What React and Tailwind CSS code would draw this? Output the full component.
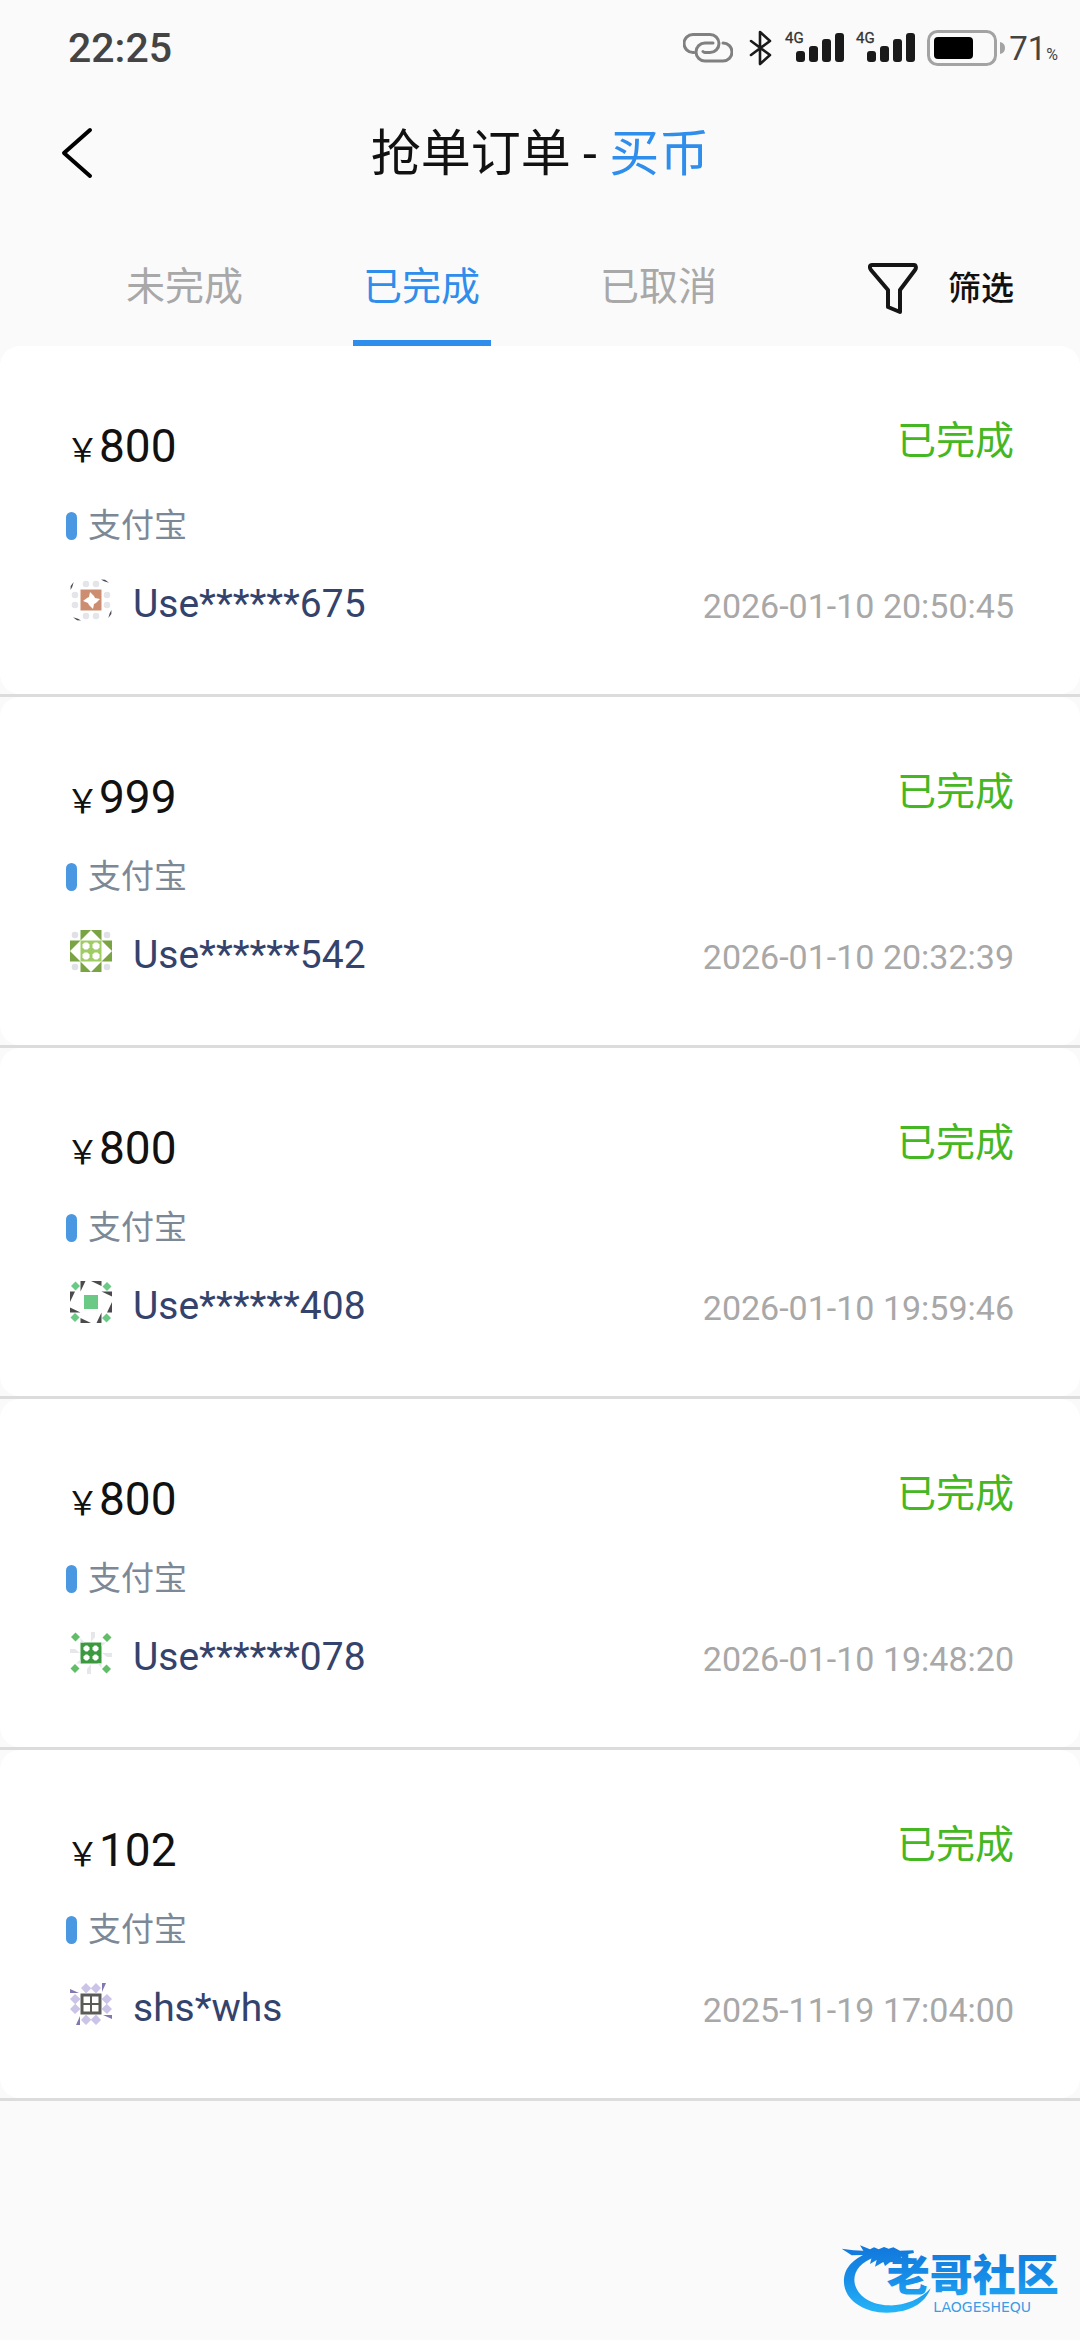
const orders = [
  { id: 1, amount: '800', user: 'Use******675', time: '2026-01-10 20:50:45', Avatar: StarAvatar },
  { id: 2, amount: '999', user: 'Use******542', time: '2026-01-10 20:32:39', Avatar: TileAvatar },
  { id: 3, amount: '800', user: 'Use******408', time: '2026-01-10 19:59:46', Avatar: RingAvatar },
  { id: 4, amount: '800', user: 'Use******078', time: '2026-01-10 19:48:20', Avatar: FlowerAvatar },
  { id: 5, amount: '102', user: 'shs*whs', time: '2025-11-19 17:04:00', Avatar: WindowAvatar },
];

const turns = [0, 90, 180, 270];

function Quarter({ children }) {
  return turns.map((a) => (
    <g key={a} transform={`rotate(${a} 21 21)`}>
      {children}
    </g>
  ));
}

function AvatarFrame({ children }) {
  return (
    <svg className="mb-2 size-[42px] shrink-0" viewBox="0 0 42 42" aria-hidden="true">
      {children}
    </svg>
  );
}

function StarAvatar() {
  return (
    <AvatarFrame>
      <rect x="10.5" y="10.5" width="21" height="21" fill="#cc8d71" />
      <path d="M20 13l4 4 1 2 5 1-4 4-2 1-1 5-4-4-1-2-5-2 4-3 2-1z" fill="#fff" />
      <Quarter>
        <circle cx="16" cy="5" r="3.3" fill="#e4e5e9" />
        <circle cx="26" cy="5" r="3.3" fill="#e4e5e9" />
        <path d="M31 .5l4 .2 4 3-5-1.500z" fill="#4a4a55" />
      </Quarter>
    </AvatarFrame>
  );
}

function TileAvatar() {
  return (
    <AvatarFrame>
      <rect x="10.5" y="10.5" width="21" height="21" fill="#a0cc66" />
      <Quarter>
        <path d="M10.5 0h21v10.5L21 0 10.5 10.5z" fill="#7aa343" />
        <circle cx="5" cy="5" r="3.3" fill="#dfe1e6" />
        <path d="M14.500 12.500h3l2 2v3l-2 2h-3l-2-2v-3z" fill="#fff" />
      </Quarter>
    </AvatarFrame>
  );
}

function RingAvatar() {
  return (
    <AvatarFrame>
      <rect x="14" y="14" width="14" height="14" fill="#69c985" />
      <Quarter>
        <path d="M10.5 0h5l-5 10.5zM21 0h10.5v5z" fill="#4b4b4d" />
        <path d="M5.500 .5l4.500 4.500-4.500 4.500L1 5z" fill="#69c985" />
      </Quarter>
    </AvatarFrame>
  );
}

function FlowerAvatar() {
  return (
    <AvatarFrame>
      <rect x="10.5" y="10.5" width="21" height="21" fill="#3b9a3e" />
      <Quarter>
        <path d="M21 0h4v5l-4 5zM10.5 6l4 4.500h-4z" fill="#e6e7ea" />
        <path d="M5.500 .5l4.500 4.500-4.500 4.500L1 5z" fill="#62bd68" />
        <path d="M15.500 13.500h2l2 2v2l-2 2h-2l-2-2v-2z" fill="#fff" />
      </Quarter>
    </AvatarFrame>
  );
}

function WindowAvatar() {
  return (
    <AvatarFrame>
      <rect x="10.5" y="10.5" width="21" height="21" fill="#5b5b58" />
      <Quarter>
        <path d="M13.500 13.500h6.500v6.500h-6.500z" fill="#fff" />
        <path d="M16 0l5 5 5-5 5 5-5 5.500-5-5-5 5L11 5z" fill="#cbc4e8" />
        <path d="M32 0h4l-4 9z" fill="#8278b0" />
      </Quarter>
    </AvatarFrame>
  );
}

function Signal() {
  return (
    <svg className="h-11 w-[59px] overflow-visible" viewBox="0 -4 59 44" aria-hidden="true">
      <text x="0" y="13" fontSize="15" fill="#333" stroke="#333" strokeWidth="0.3">4G</text>
      <g fill="#1a1a1a">
        <rect x="11" y="21" width="9" height="11" rx="3" />
        <rect x="24" y="16" width="9" height="16" rx="3" />
        <rect x="37" y="9" width="9" height="23" rx="3" />
        <rect x="50" y="3" width="9" height="29" rx="3" />
      </g>
    </svg>
  );
}

function StatusBar() {
  return (
    <div className="flex h-24 items-center justify-between pl-[68px] pr-[22px]">
      <span className="text-[41px] font-medium leading-none text-[#444]">22:25</span>
      <div className="flex items-center">
        <svg className="mr-4 h-8 w-[50px]" viewBox="0 0 50 32" fill="none" stroke="#808080" strokeWidth="3" strokeLinecap="round" aria-hidden="true">
          <path d="M11 20.500h-1A9 9 0 0 1 10 2.500h17a8.500 8.500 0 0 1 0 18h-5a4 4 0 0 1-2-1" />
          <path d="M40 11a8.500 8.500 0 0 1 0 18H22a9 9 0 0 1 0-18h8" />
        </svg>
        <svg className="mr-3 h-9 w-6" viewBox="0 0 24 36" fill="none" stroke="#1a1a1a" strokeWidth="2.6" strokeLinecap="round" strokeLinejoin="round" aria-hidden="true">
          <path d="M2 11l19 14-10 9V2l10 9L2 25" />
        </svg>
        <div className="flex gap-3">
          <Signal />
          <Signal />
        </div>
        <svg className="ml-3 h-9 w-[78px]" viewBox="0 0 78 36" aria-hidden="true">
          <rect x="1.5" y="1.5" width="67" height="33" rx="9" fill="none" stroke="#a3a3a3" strokeWidth="3" />
          <rect x="7" y="7" width="39" height="22" rx="4" fill="#000" />
          <path d="M73 12q5 1 5 6t-5 6z" fill="#a3a3a3" />
        </svg>
        <span className="ml-1 flex items-baseline leading-none text-[#444]">
          <span className="text-[33px]">71</span>
          <span className="text-[16px]">%</span>
        </span>
      </div>
    </div>
  );
}

function Tab({ label, active }) {
  return (
    <button
      role="tab"
      aria-selected={Boolean(active)}
      className={`flex flex-1 flex-col items-center justify-between pt-12 text-[39px] leading-[58px] ${active ? 'text-[#2f8eeb]' : 'text-[#a8a8a8]'}`}
    >
      {label}
      <span className={`h-[6px] w-[138px] ${active ? 'bg-[#2f8eeb]' : 'bg-transparent'}`} />
    </button>
  );
}

function Order({ amount, user, time, Avatar }) {
  return (
    <li className="border-b-[3px] border-[#dcdcdc]">
      <article className="rounded-[20px] bg-white px-[66px] pb-[60px] pt-[66px]">
        <div className="flex items-start justify-between">
          <p className="flex items-baseline leading-[68px] text-[#111]">
            <span className="text-[33px]">￥</span>
            <span className="text-[46px]">{amount}</span>
          </p>
          <span className="text-[39px] leading-[58px] text-[#45b722]">已完成</span>
        </div>
        <div className="mt-[17px] flex items-center gap-[11px]">
          <span className="h-7 w-[11px] rounded-full bg-[#4a98e2]" />
          <span className="text-[33px] leading-[48px] text-[#7d8896]">支付宝</span>
        </div>
        <div className="mt-6 flex items-center justify-between">
          <div className="flex items-center pl-1">
            <Avatar />
            <span className="ml-[21px] text-[39px] leading-[60px] text-[#34436c]">{user}</span>
          </div>
          <time className="pt-1 text-[34px] leading-none text-[#a8a8a8]">{time}</time>
        </div>
      </article>
    </li>
  );
}

function Watermark() {
  return (
    <svg className="absolute bottom-5 right-4 h-20 w-[224px]" viewBox="60 60 672 240" role="img" aria-label="老哥社区">
      <defs>
        <linearGradient id="wave" x1="0" y1="80" x2="0" y2="280" gradientUnits="userSpaceOnUse">
          <stop offset="0" stopColor="#1278dc" />
          <stop offset="0.5" stopColor="#178fe9" />
          <stop offset="1" stopColor="#26b6f8" />
        </linearGradient>
      </defs>
      <g fill="url(#wave)">
        <path d="M150 95C90 120 70 150 72 190c4 50 58 88 128 88 70 0 115-28 132-73-32 35-82 53-127 51-55-2-100-31-102-76 0-30 22-55 62-68z" />
        <path d="M65 86l35 5 30 1-10-16 30 12 12-6 14 6 16-7 14 5 14-4 20 10 40-1 2 8-32 6-8 8 33 2-3 13-32-5-30 4-15 11-5-12-25 14 5-20-20 12 5-20-27-7-33 1z" />
        <text x="200" y="212" fontSize="129" fontWeight="900">老哥社区</text>
      </g>
      <text x="340" y="276" fontSize="42" fill="#3d9ce6" fontFamily="DejaVu Sans, sans-serif">LAOGESHEQU</text>
    </svg>
  );
}

export default function App() {
  return (
    <div className="relative min-h-screen bg-[#fafafa] font-['Roboto','Noto_Sans_CJK_SC',sans-serif]" lang="zh-CN">
      <StatusBar />
      <header className="grid h-[114px] grid-cols-[1fr_auto_1fr] items-center px-[60px]">
        <button aria-label="返回" className="justify-self-start">
          <svg className="h-[54px] w-9" viewBox="0 0 36 54" fill="none" stroke="#000" strokeWidth="4" strokeLinecap="round" strokeLinejoin="round" aria-hidden="true">
            <path d="M30 4L4 27l26 23" />
          </svg>
        </button>
        <h1 className="pt-[2px] text-[50px] leading-[72px] text-[#111]">
          抢单订单 - <span className="text-[#2f8eeb]">买币</span>
        </h1>
      </header>
      <div className="flex h-[136px] items-stretch px-[66px]">
        <div role="tablist" className="flex flex-1">
          <Tab label="未完成" />
          <Tab label="已完成" active />
          <Tab label="已取消" />
        </div>
        <button className="flex w-[237px] items-center justify-end gap-[30px] pt-[22px] text-[33px] font-medium leading-[48px] text-[#111]">
          <svg className="h-[54px] w-[50px]" viewBox="0 0 50 54" fill="none" stroke="#151515" strokeWidth="4" strokeLinejoin="round" aria-hidden="true">
            <path d="M4 3h42c2 0 2.500 3 1 5L32 28v22l-12-5V28L3 8C1 5 2 3 4 3z" />
          </svg>
          筛选
        </button>
      </div>
      <ul>
        {orders.map((order) => (
          <Order key={order.id} {...order} />
        ))}
      </ul>
      <Watermark />
    </div>
  );
}
